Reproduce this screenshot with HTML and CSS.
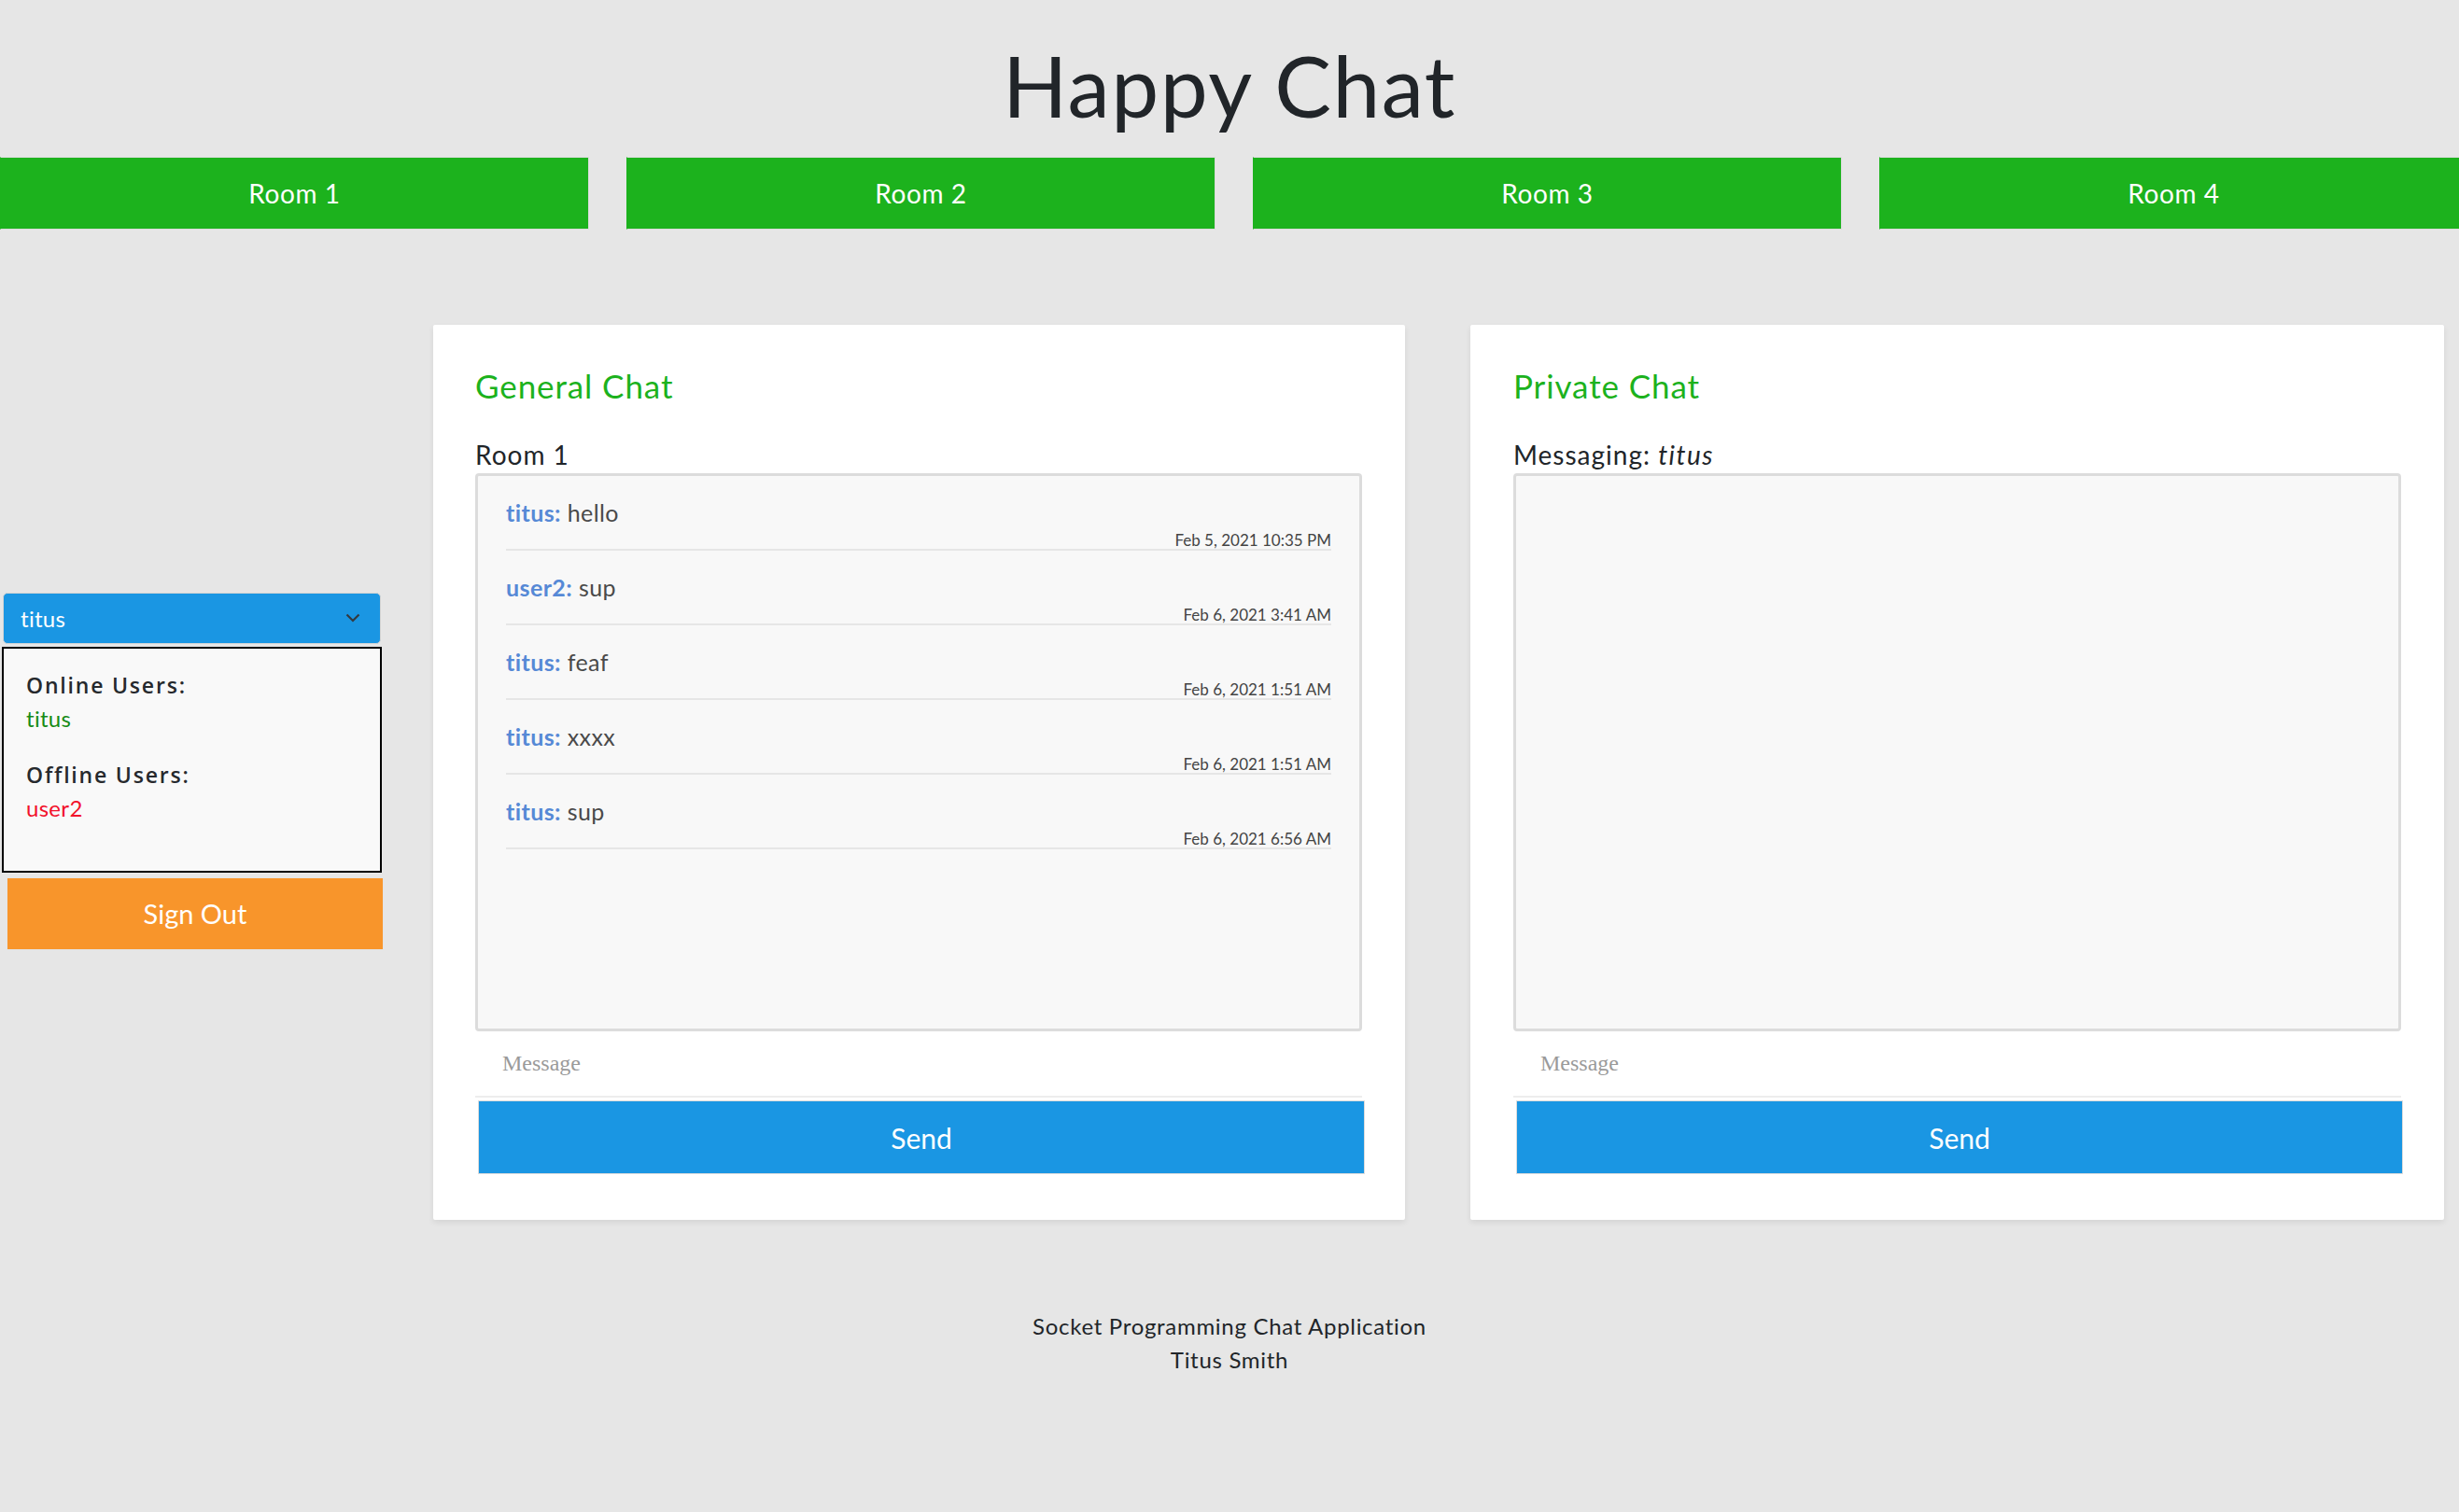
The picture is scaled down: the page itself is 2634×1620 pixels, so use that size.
FILE: index.html
```html
<!DOCTYPE html>
<html lang="en">
<head>
<meta charset="utf-8">
<title>Happy Chat</title>
<link rel="stylesheet" href="styles.css">
</head>
<body>
<header class="header">
  <h1 class="title">Happy Chat</h1>
  <nav class="rooms">
    <button class="room-btn">Room 1</button>
    <button class="room-btn">Room 2</button>
    <button class="room-btn">Room 3</button>
    <button class="room-btn">Room 4</button>
  </nav>
</header>

<main class="main">
  <aside class="sidebar">
    <div class="user-select">
      <span class="user-select-text">titus</span>
      <svg class="chevron" width="16" height="10" viewBox="0 0 16 10"><path d="M1.5 1.5 L8 8 L14.5 1.5" fill="none" stroke="#343a40" stroke-width="2.2"/></svg>
    </div>
    <div class="users-box">
      <div class="users-label">Online Users:</div>
      <div class="user online">titus</div>
      <div class="users-label group2">Offline Users:</div>
      <div class="user offline">user2</div>
    </div>
    <button class="signout-btn">Sign Out</button>
  </aside>

  <section class="card card-general">
    <h2 class="card-title">General Chat</h2>
    <div class="card-sub">Room 1</div>
    <div class="msg-box">
      <div class="msg">
        <div class="msg-line"><span class="author">titus:</span> hello</div>
        <div class="msg-time">Feb 5, 2021 10:35 PM</div>
      </div>
      <div class="msg">
        <div class="msg-line"><span class="author">user2:</span> sup</div>
        <div class="msg-time">Feb 6, 2021 3:41 AM</div>
      </div>
      <div class="msg">
        <div class="msg-line"><span class="author">titus:</span> feaf</div>
        <div class="msg-time">Feb 6, 2021 1:51 AM</div>
      </div>
      <div class="msg">
        <div class="msg-line"><span class="author">titus:</span> xxxx</div>
        <div class="msg-time">Feb 6, 2021 1:51 AM</div>
      </div>
      <div class="msg">
        <div class="msg-line"><span class="author">titus:</span> sup</div>
        <div class="msg-time">Feb 6, 2021 6:56 AM</div>
      </div>
    </div>
    <input class="msg-input" type="text" placeholder="Message">
    <button class="send-btn">Send</button>
  </section>

  <section class="card card-private">
    <h2 class="card-title">Private Chat</h2>
    <div class="card-sub">Messaging: <i>titus</i></div>
    <div class="msg-box"></div>
    <input class="msg-input" type="text" placeholder="Message">
    <button class="send-btn">Send</button>
  </section>
</main>

<footer class="footer">
  <div>Socket Programming Chat Application</div>
  <div>Titus Smith</div>
</footer>
</body>
</html>
```

FILE: styles.css
```css
html, body {
  margin: 0;
  padding: 0;
  overflow-x: hidden;
}

body {
  background: #e6e6e6;
  font-family: "Lato", "Noto Sans", sans-serif;
  color: #212529;
  width: 2634px;
  min-height: 1620px;
}

button {
  font-family: inherit;
  cursor: pointer;
}

.header {
  display: flex;
  flex-direction: column;
}

.title {
  margin: 36px 0 0;
  font-size: 91px;
  line-height: 110px;
  font-weight: 400;
  letter-spacing: 1.5px;
  text-align: center;
  color: #212529;
}

.rooms {
  display: flex;
  gap: 40px;
  margin-top: 22px;
}

.room-btn {
  flex: 0 0 631px;
  height: 78px;
  background: #1cb21d;
  border: 1px solid #dcdcdc;
  border-left-color: #1cb21d;
  color: #fff;
  font-size: 28px;
  letter-spacing: 0.6px;
  padding: 0;
}

.main {
  display: flex;
  align-items: center;
  margin-top: 102px;
}

.sidebar {
  width: 411px;
  flex: 0 0 411px;
  display: flex;
  flex-direction: column;
  margin-top: -3px;
}

.user-select {
  margin-left: 3px;
  width: 405px;
  height: 55px;
  box-sizing: border-box;
  background: #1a96e3;
  border: 1px solid #d4d4d4;
  border-radius: 5px;
  display: flex;
  align-items: center;
  justify-content: space-between;
  padding: 0 21px 0 18px;
  color: #fff;
  font-size: 24px;
  letter-spacing: 0.3px;
}

.chevron {
  display: block;
}

.users-box {
  margin: 3px 0 0 2px;
  width: 407px;
  height: 242px;
  box-sizing: border-box;
  border: 2px solid #000;
  background: #f9f9f9;
  padding: 21px 24px 0;
}

.users-label {
  font-family: "Open Sans", "Noto Sans", sans-serif;
  font-weight: 600;
  font-size: 23px;
  letter-spacing: 1.8px;
  line-height: 36px;
  color: #26292d;
}

.users-label.group2 {
  margin-top: 24px;
}

.user {
  font-size: 24px;
  line-height: 36px;
  letter-spacing: 0.3px;
}

.user.online {
  color: #178c17;
}

.user.offline {
  color: #f2122b;
}

.signout-btn {
  margin: 5px 0 0 7px;
  width: 404px;
  height: 78px;
  background: #f8952b;
  border: 1px solid #e4e4e4;
  color: #fff;
  font-size: 29px;
  padding: 0;
}

.card {
  background: #fff;
  box-sizing: border-box;
  padding: 44px 0 49px;
  box-shadow: 0 3px 6px rgba(0, 0, 0, 0.08);
  border-radius: 2px;
  display: flex;
  flex-direction: column;
  align-items: flex-start;
}

.card-general {
  margin-left: 53px;
  width: 1041px;
  flex: 0 0 1041px;
  padding-left: 45px;
  padding-right: 46px;
}

.card-private {
  margin-left: 70px;
  width: 1043px;
  flex: 0 0 1043px;
  padding-left: 46px;
  padding-right: 46px;
}

.card-title {
  margin: 0;
  font-size: 35px;
  line-height: 42px;
  font-weight: 400;
  letter-spacing: 0.9px;
  color: #1cb21d;
}

.card-sub {
  margin-top: 36px;
  font-size: 28px;
  line-height: 34px;
  letter-spacing: 1px;
  color: #212529;
}

.card-sub i {
  letter-spacing: 1.5px;
}

.msg-box {
  margin-top: 3px;
  width: 100%;
  height: 598px;
  box-sizing: border-box;
  border: 3px solid #dcdcdc;
  border-radius: 4px;
  background: #f8f8f8;
  padding: 0 30px;
}

.msg {
  padding-top: 24px;
  border-bottom: 2px solid #e6e6e6;
}

.msg-line {
  font-size: 25px;
  line-height: 30px;
  letter-spacing: 0.4px;
  color: #4a4a4a;
}

.author {
  color: #5689d6;
  font-weight: 700;
}

.msg-time {
  margin-top: 6px;
  font-size: 17px;
  line-height: 18px;
  text-align: right;
  color: #444;
}

.msg-input {
  display: block;
  width: 100%;
  height: 71px;
  box-sizing: border-box;
  border: none;
  border-bottom: 2px solid #ededed;
  background: transparent;
  padding: 0 0 0 29px;
  font-family: "Liberation Serif", "Times New Roman", serif;
  font-size: 24px;
  color: #333;
  outline: none;
}

.msg-input::placeholder {
  color: #9a9a9a;
}

.send-btn {
  margin: 3px 0 0 3px;
  width: 950px;
  height: 79px;
  background: #1a96e3;
  border: 1px solid #dcdcdc;
  color: #fff;
  font-size: 30px;
  padding: 0;
}

.footer {
  margin-top: 96px;
  text-align: center;
  font-size: 24px;
  line-height: 36px;
  letter-spacing: 0.7px;
  color: #212529;
}
```
